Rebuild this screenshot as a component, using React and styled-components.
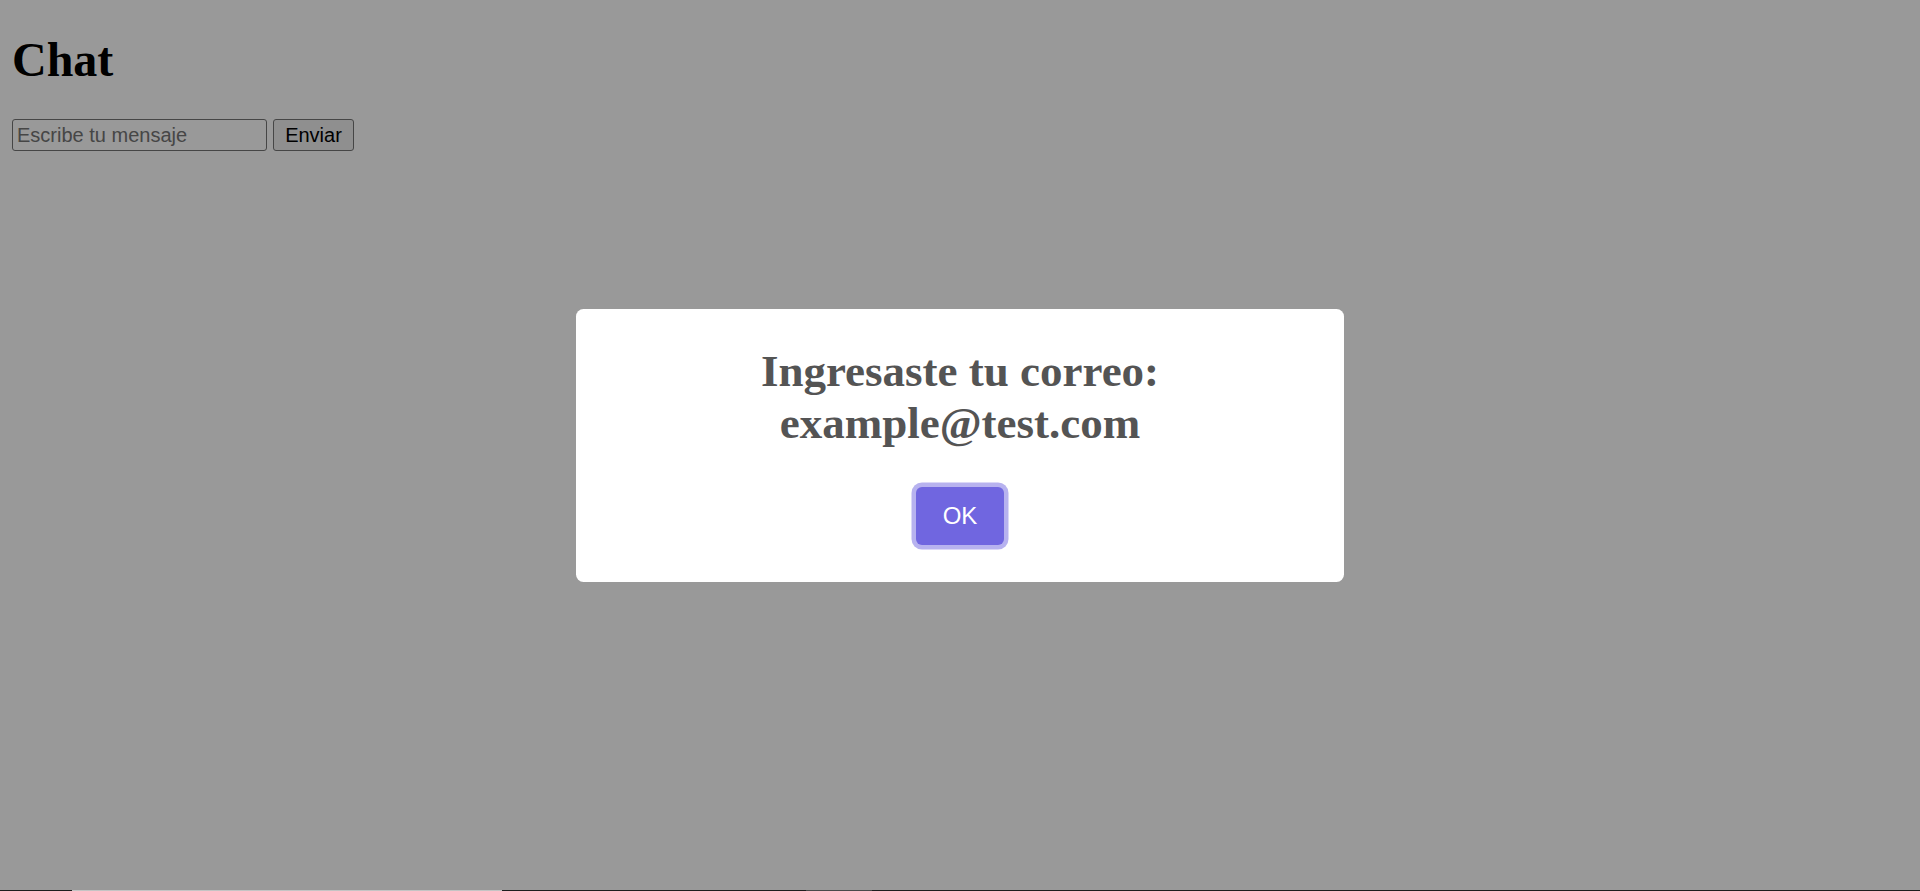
import styled, { createGlobalStyle } from "styled-components";

const GlobalStyle = createGlobalStyle`
  html, body {
    height: 100%;
  }
  body {
    margin: 0 12px 12px;
    background: #ffffff;
    font-family: "Liberation Serif", "Times New Roman", serif;
    color: #000;
  }
`;

function App() {
  return (
    <>
      <GlobalStyle />
      <Page>
        <Title>Chat</Title>
        <Form onSubmit={(e) => e.preventDefault()}>
          <MessageInput type="text" placeholder="Escribe tu mensaje" />
          <SendButton type="submit">Enviar</SendButton>
        </Form>
      </Page>

      <Backdrop>
        <Popup role="dialog" aria-modal="true">
          <PopupTitle>Ingresaste tu correo: example@test.com</PopupTitle>
          <Actions>
            <ConfirmButton type="button" autoFocus>
              OK
            </ConfirmButton>
          </Actions>
        </Popup>
      </Backdrop>

      <BottomEdge>
        <EdgeSegment $w={72} $c="#1e1e1e" />
        <EdgeSegment $w={430} $c="#c4c4c4" />
        <EdgeSegment $w={304} $c="#1e1e1e" />
        <EdgeSegment $w={66} $c="#4a4a4a" />
        <EdgeSegment $grow $c="#1e1e1e" />
      </BottomEdge>
    </>
  );
}

export default App;

const Page = styled.div`
  display: block;
`;

const Title = styled.h1`
  margin: 32px 0;
  font-size: 48px;
  font-weight: bold;
  line-height: normal;
`;

const Form = styled.form`
  display: flex;
  align-items: center;
  gap: 6px;
`;

const MessageInput = styled.input`
  box-sizing: border-box;
  width: 255px;
  height: 32px;
  padding: 1px 4px;
  border: 1.5px solid #767676;
  border-radius: 3px;
  background: #fff;
  font-family: "Liberation Sans", Arial, sans-serif;
  font-size: 20px;
  color: #000;

  &::placeholder {
    color: #757575;
  }
`;

const SendButton = styled.button`
  box-sizing: border-box;
  width: 81px;
  height: 32px;
  padding: 0 9px;
  border: 1.5px solid #767676;
  border-radius: 3px;
  background: #efefef;
  font-family: "Liberation Sans", Arial, sans-serif;
  font-size: 20px;
  color: #000;
`;

const Backdrop = styled.div`
  position: fixed;
  inset: 0;
  display: grid;
  place-items: center;
  padding: 15px;
  background: rgba(0, 0, 0, 0.4);
  z-index: 1060;
`;

const Popup = styled.div`
  box-sizing: border-box;
  width: 768px;
  max-width: 100%;
  padding: 0 0 30px;
  border-radius: 7.5px;
  background: #fff;
  color: #545454;
  font-size: 24px;
`;

const PopupTitle = styled.h2`
  margin: 0;
  padding: 36px 45px 0;
  font-family: "Liberation Serif", "Times New Roman", serif;
  font-size: 45px;
  font-weight: 600;
  line-height: normal;
  text-align: center;
  color: inherit;
  word-wrap: break-word;
`;

const Actions = styled.div`
  display: flex;
  flex-wrap: wrap;
  align-items: center;
  justify-content: center;
  margin: 30px auto 0;
`;

const ConfirmButton = styled.button`
  margin: 7.5px;
  padding: 15px 26.4px;
  border: 0;
  border-radius: 6px;
  background-color: #7066e0;
  color: #fff;
  font-family: "Liberation Sans", Arial, sans-serif;
  font-size: 24px;
  font-weight: 500;
  line-height: normal;
  box-shadow: 0 0 0 4.5px rgba(112, 102, 224, 0.5);
  outline: none;
  cursor: pointer;
`;

const BottomEdge = styled.div`
  position: fixed;
  left: 0;
  right: 0;
  bottom: 0;
  height: 1px;
  display: flex;
  z-index: 2000;
`;

const EdgeSegment = styled.div`
  flex: ${(p) => (p.$grow ? "1 1 auto" : `0 0 ${p.$w}px`)};
  background: ${(p) => p.$c};
`;
